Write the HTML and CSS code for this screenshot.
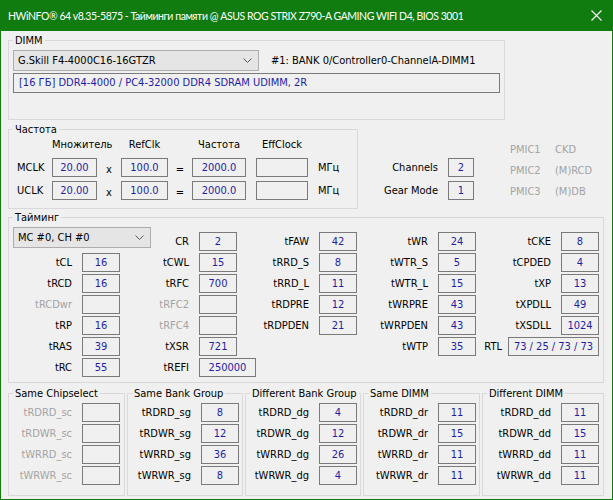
FILE: index.html
```html
<!DOCTYPE html>
<html lang="ru">
<head>
  <meta charset="UTF-8">
  <title>Тайминги памяти</title>
  <link rel="stylesheet" href="styles.css">
</head>
<body>

  <div class="window">
    <div class="titlebar">
      <span class="title">HWiNFO® 64 v8.35-5875 - Тайминги памяти @ ASUS ROG STRIX Z790-A GAMING WIFI D4, BIOS 3001</span>
      <svg class="close" width="11" height="11" viewBox="0 0 11 11">
        <path d="M0.5 0.5 L10.5 10.5 M10.5 0.5 L0.5 10.5" stroke="#fff" stroke-width="1.1" fill="none"/>
      </svg>
    </div>

    <div class="content">
      <!-- DIMM -->
      <div class="group dimm">
        <span class="group-title">DIMM</span>
        <div class="dimm-row">
          <div class="combo dimm-combo">
            <span>G.Skill F4-4000C16-16GTZR</span>
            <svg width="9" height="5" viewBox="0 0 9 5"><path d="M0.5 0.5 L4.5 4.5 L8.5 0.5" stroke="#555" fill="none"/></svg>
          </div>
          <span class="slot">#1: BANK 0/Controller0-ChannelA-DIMM1</span>
        </div>
        <div class="info-box">[16 ГБ] DDR4-4000 / PC4-32000 DDR4 SDRAM UDIMM, 2R</div>
      </div>

      <!-- Частота -->
      <div class="freq-row">
        <div class="group freq">
          <span class="group-title">Частота</span>
          <div class="freq-grid">
            <span></span>
            <span class="head">Множитель</span>
            <span></span>
            <span class="head">RefClk</span>
            <span></span>
            <span class="head">Частота</span>
            <span></span>
            <span class="head">EffClock</span>
            <span></span>

            <span class="rowname">MCLK</span>
            <span class="val">20.00</span>
            <span class="op">x</span>
            <span class="val">100.0</span>
            <span class="op">=</span>
            <span class="val">2000.0</span>
            <span></span>
            <span class="val"></span>
            <span class="unit">МГц</span>

            <span class="rowname">UCLK</span>
            <span class="val">20.00</span>
            <span class="op">x</span>
            <span class="val">100.0</span>
            <span class="op">=</span>
            <span class="val">2000.0</span>
            <span></span>
            <span class="val"></span>
            <span class="unit">МГц</span>
          </div>
        </div>

        <div class="channels">
          <span class="lbl">Channels</span><span class="val">2</span>
          <span class="lbl">Gear Mode</span><span class="val">1</span>
        </div>

        <div class="pmic">
          <span>PMIC1</span><span>CKD</span>
          <span>PMIC2</span><span>(M)RCD</span>
          <span>PMIC3</span><span>(M)DB</span>
        </div>
      </div>

      <!-- Тайминг -->
      <div class="group timing">
        <span class="group-title">Тайминг</span>
        <div class="timing-grid">
          <div class="combo mc-combo">
            <span>MC #0, CH #0</span>
            <svg width="9" height="5" viewBox="0 0 9 5"><path d="M0.5 0.5 L4.5 4.5 L8.5 0.5" stroke="#555" fill="none"/></svg>
          </div>
          <span class="lbl">CR</span><span class="val">2</span>
          <span class="lbl">tFAW</span><span class="val">42</span>
          <span class="lbl">tWR</span><span class="val">24</span>
          <span class="lbl">tCKE</span><span class="val">8</span>

          <span class="lbl">tCL</span><span class="val">16</span>
          <span class="lbl">tCWL</span><span class="val">15</span>
          <span class="lbl">tRRD_S</span><span class="val">8</span>
          <span class="lbl">tWTR_S</span><span class="val">5</span>
          <span class="lbl">tCPDED</span><span class="val">4</span>

          <span class="lbl">tRCD</span><span class="val">16</span>
          <span class="lbl">tRFC</span><span class="val">700</span>
          <span class="lbl">tRRD_L</span><span class="val">11</span>
          <span class="lbl">tWTR_L</span><span class="val">15</span>
          <span class="lbl">tXP</span><span class="val">13</span>

          <span class="lbl off">tRCDwr</span><span class="val"></span>
          <span class="lbl off">tRFC2</span><span class="val"></span>
          <span class="lbl">tRDPRE</span><span class="val">12</span>
          <span class="lbl">tWRPRE</span><span class="val">43</span>
          <span class="lbl">tXPDLL</span><span class="val">49</span>

          <span class="lbl">tRP</span><span class="val">16</span>
          <span class="lbl off">tRFC4</span><span class="val"></span>
          <span class="lbl">tRDPDEN</span><span class="val">21</span>
          <span class="lbl">tWRPDEN</span><span class="val">43</span>
          <span class="lbl">tXSDLL</span><span class="val">1024</span>

          <span class="lbl">tRAS</span><span class="val">39</span>
          <span class="lbl">tXSR</span><span class="val">721</span>
          <span></span><span></span>
          <span class="lbl">tWTP</span><span class="val">35</span>
          <div class="rtl"><span>RTL</span><span class="val rtl-val">73 / 25 / 73 / 73</span></div>

          <span class="lbl">tRC</span><span class="val">55</span>
          <span class="lbl">tREFI</span><span class="val wide">250000</span>
        </div>
      </div>

      <!-- нижние группы -->
      <div class="bottom-row">
        <div class="group sub g1">
          <span class="group-title">Same Chipselect</span>
          <div class="sub-grid">
            <span class="lbl off">tRDRD_sc</span><span class="val"></span>
            <span class="lbl off">tRDWR_sc</span><span class="val"></span>
            <span class="lbl off">tWRRD_sc</span><span class="val"></span>
            <span class="lbl off">tWRWR_sc</span><span class="val"></span>
          </div>
        </div>
        <div class="group sub g2">
          <span class="group-title">Same Bank Group</span>
          <div class="sub-grid">
            <span class="lbl">tRDRD_sg</span><span class="val">8</span>
            <span class="lbl">tRDWR_sg</span><span class="val">12</span>
            <span class="lbl">tWRRD_sg</span><span class="val">36</span>
            <span class="lbl">tWRWR_sg</span><span class="val">8</span>
          </div>
        </div>
        <div class="group sub g3">
          <span class="group-title">Different Bank Group</span>
          <div class="sub-grid">
            <span class="lbl">tRDRD_dg</span><span class="val">4</span>
            <span class="lbl">tRDWR_dg</span><span class="val">12</span>
            <span class="lbl">tWRRD_dg</span><span class="val">26</span>
            <span class="lbl">tWRWR_dg</span><span class="val">4</span>
          </div>
        </div>
        <div class="group sub g4">
          <span class="group-title">Same DIMM</span>
          <div class="sub-grid">
            <span class="lbl">tRDRD_dr</span><span class="val">11</span>
            <span class="lbl">tRDWR_dr</span><span class="val">15</span>
            <span class="lbl">tWRRD_dr</span><span class="val">11</span>
            <span class="lbl">tWRWR_dr</span><span class="val">11</span>
          </div>
        </div>
        <div class="group sub g5">
          <span class="group-title">Different DIMM</span>
          <div class="sub-grid">
            <span class="lbl">tRDRD_dd</span><span class="val">11</span>
            <span class="lbl">tRDWR_dd</span><span class="val">15</span>
            <span class="lbl">tWRRD_dd</span><span class="val">11</span>
            <span class="lbl">tWRWR_dd</span><span class="val">11</span>
          </div>
        </div>
      </div>
    </div>
  </div>

</body>
</html>
```

FILE: styles.css
```css
body {
  margin: 0;
  font-family: "DejaVu Sans Condensed", "DejaVu Sans", sans-serif;
  font-stretch: condensed;
  font-size: 11px;
  color: #000;
  background: #f0f0f0;
}

.window {
  width: 613px;
  height: 500px;
  box-sizing: border-box;
  border: 1px solid #107c10;
  border-top: none;
  background: #f0f0f0;
  overflow: hidden;
}

.titlebar {
  height: 31px;
  margin: 0 -1px;
  background: #107c10;
  color: #fff;
  display: flex;
  align-items: center;
  justify-content: space-between;
  padding: 0 11px 0 8px;
  font-family: Lato, "Liberation Sans", sans-serif;
  font-stretch: normal;
  font-size: 10.5px;
  letter-spacing: -0.45px;
}

.close {
  display: block;
}

.content {
  padding: 0 0 0 7px;
}

.group {
  position: relative;
  box-sizing: border-box;
  border: 1px solid #d9d9d9;
}

.group-title {
  position: absolute;
  top: -7px;
  left: 4px;
  padding: 0 2px;
  line-height: 13px;
  background: #f0f0f0;
  white-space: nowrap;
}

.val {
  box-sizing: border-box;
  height: 19px;
  border: 1px solid #7a7a7a;
  background: #f0f0f0;
  color: #1f1fa6;
  text-align: center;
  line-height: 17px;
  white-space: nowrap;
}

.lbl {
  text-align: right;
  padding-right: 10px;
  line-height: 19px;
  white-space: nowrap;
}

.off {
  color: #a3a3a3;
}

.combo {
  box-sizing: border-box;
  height: 21px;
  border: 1px solid #adadad;
  background: #e5e5e5;
  display: flex;
  align-items: center;
  justify-content: space-between;
  padding: 0 6px 0 4px;
}

/* DIMM */
.dimm {
  margin-top: 9px;
  width: 497px;
  height: 80px;
  padding: 9px 0 0 4px;
}

.dimm-row {
  display: flex;
  align-items: center;
}

.dimm-combo {
  width: 246px;
}

.slot {
  margin-left: 12px;
}

.info-box {
  box-sizing: border-box;
  margin-top: 2px;
  width: 487px;
  height: 20px;
  border: 1px solid #7a7a7a;
  padding-left: 5px;
  line-height: 18px;
  color: #1f1fa6;
}

/* Частота */
.freq-row {
  display: flex;
  margin-top: 9px;
}

.freq {
  width: 350px;
  height: 80px;
  padding-top: 5px;
}

.freq-grid {
  display: grid;
  grid-template-columns: 43px 45px 24px 47px 24px 54px 10px 52px auto;
  grid-template-rows: 19px 19px 19px;
  row-gap: 4px;
  align-items: center;
}

.head {
  text-align: center;
  white-space: nowrap;
}

.rowname {
  padding-left: 8px;
}

.op {
  text-align: center;
  padding-top: 3px;
}

.unit {
  padding-left: 10px;
}

.channels {
  display: grid;
  grid-template-columns: 80px 26px;
  grid-template-rows: 19px 19px;
  column-gap: 10px;
  row-gap: 4px;
  padding-top: 29px;
}

.channels .lbl {
  padding-right: 0;
}

.pmic {
  display: grid;
  grid-template-columns: 45px auto;
  grid-auto-rows: 21px;
  line-height: 21px;
  margin-left: 36px;
  padding-top: 10px;
  color: #a3a3a3;
}

/* Тайминг */
.timing {
  margin-top: 8px;
  width: 596px;
  height: 166px;
  padding-top: 14px;
}

.timing-grid {
  display: grid;
  grid-template-columns: 73px 38px 79px 38px 82px 38px 81px 38px 85px 38px;
  grid-auto-rows: 19px;
  row-gap: 2px;
}

.mc-combo {
  grid-column: span 2;
  width: 138px;
  margin: -5px 0 0 4px;
}

.wide {
  width: 57px;
}

.rtl {
  grid-column: span 2;
  display: flex;
  align-items: center;
  justify-content: flex-end;
  gap: 6px;
}

.rtl-val {
  width: 91px;
}

/* нижние группы */
.bottom-row {
  display: flex;
  gap: 2px;
  margin-top: 10px;
}

.sub {
  height: 103px;
  padding-top: 9px;
}

.sub-grid {
  display: grid;
  grid-template-columns: 73px 38px;
  grid-auto-rows: 19px;
  row-gap: 2px;
}

.g1 { width: 117px; }
.g2 { width: 116px; }
.g3 { width: 116px; }
.g4 { width: 117px; }
.g5 { width: 122px; }

.g4 .sub-grid { grid-template-columns: 74px 38px; }
.g5 .sub-grid { grid-template-columns: 78px 38px; }
```
